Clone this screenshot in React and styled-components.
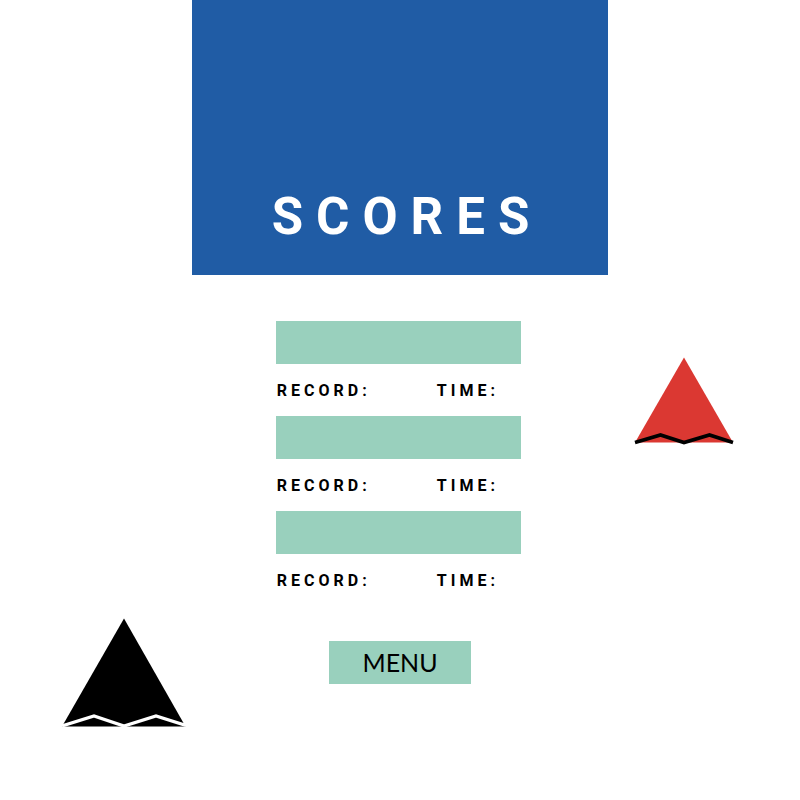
import React from "react";
import styled, { createGlobalStyle } from "styled-components";

const GlobalStyle = createGlobalStyle`
  *, *::before, *::after { box-sizing: border-box; }
  body {
    margin: 0;
    background: #fff;
    color: #000;
    font-family: Roboto, "Liberation Sans", sans-serif;
  }
`;

const Page = styled.div`
  display: grid;
  grid-template-columns: 24% 52% 24%;
  min-height: 100vh;
`;

const Side = styled.aside`
  display: flex;
  flex-direction: column;
  justify-content: flex-start;
  align-items: ${({ $align }) => $align};
  padding: ${({ $padding }) => $padding};

  svg { display: block; flex: none; }
`;

const Main = styled.main`
  display: flex;
  flex-direction: column;
  align-items: center;
`;

const Banner = styled.header`
  display: flex;
  align-items: flex-end;
  justify-content: center;
  width: 100%;
  padding: 188px 0 30px 14px;
  background: #205ca5;
`;

const Title = styled.h1`
  margin: 0;
  color: #fff;
  font-size: 51px;
  font-weight: 700;
  line-height: 57px;
  letter-spacing: 13px;
`;

const ScoreList = styled.ul`
  width: 59%;
  min-width: 240px;
  margin: 46px 3px 0 0;
  padding: 0;
  list-style: none;
`;

const Bar = styled.div`
  height: 43px;
  background: #99d0bd;
`;

const Stats = styled.div`
  display: grid;
  grid-template-columns: 160px 1fr;
  align-items: center;
  height: 52px;
  padding-left: 1px;
  font-size: 16px;
  font-weight: 700;
  letter-spacing: 4px;
`;

const MenuButton = styled.button`
  width: 34%;
  min-width: 120px;
  height: 43px;
  margin-top: 35px;
  padding: 0;
  border: 0;
  background: #99d0bd;
  color: #000;
  font-family: Lato, "Open Sans", sans-serif;
  font-size: 25px;
  line-height: 43px;
  cursor: pointer;
`;

function BlackShip() {
  return (
    <svg width="124" height="110" viewBox="0 0 124 110" aria-hidden="true">
      <path d="M62 0.5 L123.5 108.5 H0 Z" fill="#000" />
      <path d="M0 108 L32 98 L62 108 L94 98 L124 107.5" fill="none" stroke="#fff" strokeWidth="3.4" />
    </svg>
  );
}

function RedShip() {
  return (
    <svg width="100" height="88" viewBox="0 0 100 88" aria-hidden="true">
      <path d="M50 0.5 L99 85.5 H1 Z" fill="#db3832" />
      <path d="M1 85.5 L26.5 78 L50 85.5 L75.5 78 L99 85.5" fill="none" stroke="#000" strokeWidth="3.6" />
    </svg>
  );
}

const entries = [1, 2, 3];

export default function App() {
  return (
    <>
      <GlobalStyle />
      <Page>
        <Side $align="flex-end" $padding="618px 6px 0 0">
          <BlackShip />
        </Side>
        <Main>
          <Banner>
            <Title>SCORES</Title>
          </Banner>
          <ScoreList>
            {entries.map((id) => (
              <li key={id}>
                <Bar />
                <Stats>
                  <span>RECORD:</span>
                  <span>TIME:</span>
                </Stats>
              </li>
            ))}
          </ScoreList>
          <MenuButton type="button">MENU</MenuButton>
        </Main>
        <Side $align="flex-start" $padding="357px 0 0 26px">
          <RedShip />
        </Side>
      </Page>
    </>
  );
}
